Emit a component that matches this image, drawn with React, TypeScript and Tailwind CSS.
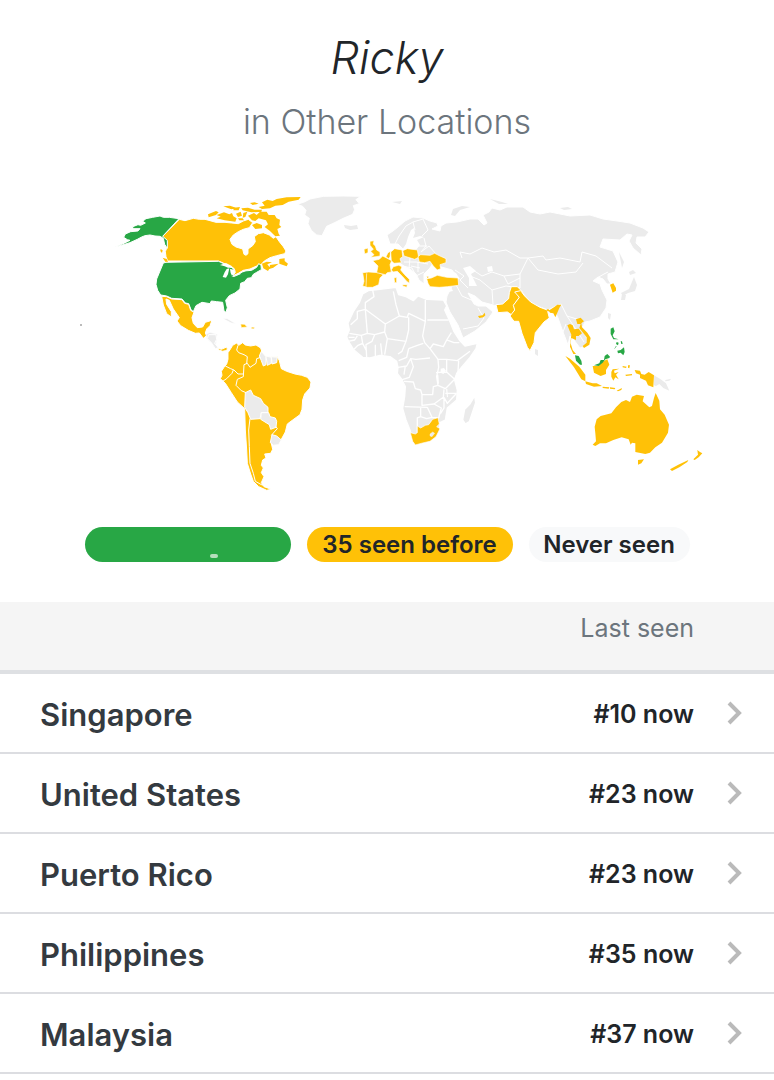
type Location = {
  name: string;
  rank: string;
};

const locations: Location[] = [
  { name: "Singapore", rank: "#10 now" },
  { name: "United States", rank: "#23 now" },
  { name: "Puerto Rico", rank: "#23 now" },
  { name: "Philippines", rank: "#35 now" },
  { name: "Malaysia", rank: "#37 now" },
];

const NOW = "#28a745";
const BEFORE = "#ffc107";
const NEVER = "#ebebeb";

function NorthAmerica() {
  return (
    <g transform="translate(110 185) scale(0.3333)" strokeWidth="3" stroke="#fff">
      {/* Greenland */}
      <path fill={NEVER} d="M562 58 585 50 600 42 640 34 700 33 752 34 738 44 748 56 730 62 734 74 728 88 700 100 672 114 650 124 636 152 620 150 604 136 594 116 598 100 584 90 588 76 578 64z" />
      {/* Canada */}
      <path fill={BEFORE} d="M208 103 225 107 250 100 268 103 285 103 300 107 318 112 345 112 365 114 385 116 400 108 415 103 428 113 418 128 400 133 385 140 370 150 360 163 366 178 378 186 398 192 402 208 408 211 414 206 414 192 428 182 436 170 433 155 445 146 460 143 478 150 490 160 498 155 508 170 520 185 528 198 524 206 500 212 480 218 463 228 452 240 440 243 420 252 400 256 385 265 366 274 376 262 372 250 362 246 352 240 335 232 325 228 173 228 168 215 166 200 170 190 172 170 158 154z" />
      <g fill={BEFORE} stroke="none">
        <path d="M158 218 170 222 177 236 166 230zM152 192l6 4-2 8-5-6zM456 236 470 230 486 232 472 238 480 248 474 258 460 250zM480 240 506 236 490 248 478 252zM508 222 524 220 524 228 534 236 530 244 508 236z" />
        <path d="M294 88 318 78 326 82 318 90 296 97zM320 90 342 82 358 88 366 84 370 94 380 100 376 110 344 106 320 100 332 95zM340 64 360 62 380 69 364 73zM372 68 390 66 386 76 370 76zM378 86 392 80 396 92 384 96zM400 84 412 80 406 96 398 98zM394 70 414 68 434 74 456 74 454 80 424 82 398 76zM420 54 434 52 446 56 428 60zM414 92 432 84 440 90 450 80 470 80 476 90 494 90 500 100 510 104 508 120 514 126 502 132 506 146 510 152 496 154 480 138 464 126 474 118 468 106 446 100 436 108 426 106zM426 120 440 114 456 120 456 130 436 132zM384 100 398 100 402 106 388 106z" />
        <path d="M446 66 464 62 456 52 472 44 488 48 500 42 530 37 572 36 566 44 536 50 518 60 496 62 480 70 456 72z" />
      </g>
      {/* United States */}
      <path fill={NOW} d="M168 232 326 229 345 238 366 248 374 256 370 272 386 268 402 258 425 256 440 247 446 236 453 240 454 254 440 262 430 268 424 278 412 280 404 290 392 295 390 312 375 324 358 332 347 346 352 368 348 382 342 378 338 352 320 350 304 348 300 356 276 352 258 362 250 380 243 374 236 356 226 354 216 342 185 340 170 333 152 330 143 316 138 298 140 282 150 258 160 234z" />
      <path fill={NOW} d="M207 101 178 97 160 97 150 93 128 97 108 101 98 109 106 114 92 121 84 119 66 126 72 131 90 131 84 138 62 140 46 147 41 157 52 164 60 166 44 174 14 187 60 173 82 163 95 156 105 152 120 150 135 153 150 154 160 160 164 178 172 190 172 166 158 154z" />
      {/* Great Lakes */}
      <path fill="#fff" stroke="none" d="M330 240 348 234 364 242 370 248 354 248 344 244zM350 252 358 250 354 268 348 278 338 276 344 262zM360 252 374 254 374 264 366 272 362 264zM364 276 384 268 394 266 372 276zM396 258 412 256 400 262z" />
      {/* Mexico */}
      <path fill={BEFORE} d="M155 334 170 335 185 342 216 344 224 355 236 358 242 376 252 382 246 398 250 415 262 428 278 426 286 412 306 406 300 422 290 432 286 444 290 452 280 460 268 444 256 445 235 436 212 422 201 408 208 398 190 372 178 346 168 342 170 358 184 380 184 396 170 386 160 360z" />
      {/* Central America and the Caribbean */}
      <g fill={NEVER} strokeWidth="2">
        <path d="M288 448 300 442 322 448 320 466 318 478 300 470 290 460z" />
        <path d="M338 400 352 401 378 416 364 414 348 406z" />
        <path fill={BEFORE} d="M392 417 404 418 412 426 394 428z" />
        <path fill={BEFORE} d="M424 426l10 1-2 5-8-1z" />
      </g>
    </g>
  );
}

function SouthAmerica() {
  return (
    <g transform="translate(200 320) scale(0.3333)" strokeWidth="3" stroke="#fff">
      <path fill={NEVER} d="M26 44 48 44 50 58 44 70 56 84 46 86 34 68 22 56z" />
      <path fill={BEFORE} d="M52 84 64 88 78 82 84 88 76 92 68 94 56 90z" />
      <path fill={BEFORE} d="M61 176 66 166 64 154 72 142 80 132 84 118 84 98 92 86 98 76 110 69 116 76 128 68 136 75 152 78 168 75 182 84 186 96 195 108 215 110 232 110 238 122 244 146 260 154 285 162 305 166 322 172 333 186 330 204 314 222 308 240 306 268 300 284 278 300 262 312 256 336 244 358 236 374 220 376 214 370 218 388 212 400 194 402 198 414 188 420 184 436 190 444 184 458 192 470 184 488 192 500 214 508 200 511 176 500 160 484 152 462 142 430 140 390 136 330 134 266 112 246 94 218 76 190z" />
      <g fill={NEVER}>
        <path d="M184 94 198 110 198 134 190 138 184 122 178 108z" />
        <path d="M198 108 214 112 214 130 202 136z" />
        <path d="M214 110 232 112 230 128 216 132z" />
        <path d="M136 218 152 210 160 226 182 236 190 250 204 262 204 278 184 278 180 296 152 298 144 278 134 262z" />
        <path d="M184 278 206 278 210 290 226 294 230 304 228 322 212 328 208 314 182 298z" />
        <path d="M216 344 230 348 244 360 236 374 220 376 211 368z" />
      </g>
      <g fill="none">
        <path d="M182 112 170 116 168 130 150 142 142 130 132 134 130 170 112 178 108 196 124 212 138 218" />
        <path d="M114 76 110 90 116 98 132 104 142 110 140 132" />
        <path d="M76 138 92 146 102 150 114 162 130 162M68 184 80 176 96 160 100 150" />
        <path d="M150 296 146 330 148 380 150 430 160 460 166 484 188 496" />
        <path d="M228 320 232 326 214 346" />
      </g>
    </g>
  );
}

function Africa() {
  return (
    <g transform="translate(330 280) scale(0.3333)" strokeWidth="4" stroke="#fff" strokeLinejoin="round">
      <path fill={NEVER} d="M98 42 115 32 150 28 198 22 206 44 228 50 250 62 264 48 290 58 340 60 350 78 344 90 360 125 372 155 388 180 405 198 442 190 438 206 420 232 396 260 380 280 374 300 382 330 380 360 352 384 346 420 330 428 328 452 310 475 285 490 256 494 244 470 240 450 228 420 218 385 224 350 226 320 214 296 202 280 204 262 200 244 180 230 150 226 120 234 98 232 72 210 56 185 50 170 58 150 54 130 70 95 88 68z" />
      <g fill="none">
        <path d="M128 30 132 50 106 68 106 88 166 132 208 108 198 74 190 34M106 88 82 94 82 116 62 134M106 88 112 160 94 166 58 160M166 132 164 156 134 164 112 160" />
        <path d="M208 108 232 112 236 100 286 124 286 60M292 120 356 120M236 112 236 150 228 184 216 214 204 222M286 124 278 168 284 188 300 206 324 238 350 238 382 242 420 214" />
        <path d="M164 156 172 176 164 224M172 176 228 184M134 164 126 184 108 194 110 232M136 230 136 194M156 226 152 190M94 166 98 190 84 196 72 208M54 184 74 180 82 168M56 172 74 172M98 190 108 210" />
        <path d="M236 206 262 196 280 190M236 206 230 232 206 242M204 262 230 258 242 236 258 238 300 234M242 236 250 260 238 292 214 300M226 258 222 284" />
        <path d="M300 206 310 192 340 200 350 180 364 158M350 180 372 188 388 188M324 238 326 262 320 290 324 316 346 326 374 298 350 276 350 238M374 298 384 276 386 242M318 278 350 276" />
        <path d="M222 304 250 306 256 326 272 330 276 344 308 344 310 320 324 316M224 380 292 382M272 382 272 410 262 414 262 460M276 344 276 376 312 372 340 352 342 328M342 352 352 370 380 340M292 382 306 412 326 414 334 384 312 372M272 410 290 416 306 412M342 352 342 384 332 400M346 340 380 340" />
      </g>
      <path fill="#fff" stroke="none" d="M332 266l10-2 6 8-8 10-8-4zM320 284l3 26 4 2-2-28zM348 328l3 24 3-1-2-24z" />
      {/* South Africa */}
      <path fill={BEFORE} strokeWidth="2" d="M241 458 256 462 262 458 262 438 272 444 286 436 296 434 308 418 324 413 328 432 320 440 330 446 318 470 300 484 278 489 256 495 248 484z" />
      <path fill={NEVER} strokeWidth="1" d="M300 462 308 456 314 460 306 470 300 468z" />
      <path fill={NEVER} d="M434 348 437 368 418 425 406 432 398 420 404 388 420 372z" />
    </g>
  );
}

function Eurasia() {
  return (
    <g stroke="#fff" strokeWidth="1" strokeLinejoin="round">
      <path
        fill={NEVER}
        d="M387 235 393 231 398 227 405 221 413 217 423 218 430 221 437 223 438 226 432 229 440 231 441 226 446 223 457 222 470 219 478 219 484 225 487 223 483 215 489 212 492 208 500 210 507 207 523 207 530 212 540 214 550 212 570 216 590 215 603 219 617 221 630 223 643 228 649 232 645 237 637 237 636 243 642 249 641 255 633 248 629 241 632 235 627 234 620 240 603 239 600 247 613 251 618 262 615 272 608 274 608 279 611 284 607 284 603 279 598 277 593 281 600 284 602 290 607 300 606 308 600 317 590 321 585 322 582 328 586 336 588 345 580 348 574 340 570 336 568 345 563 332 558 318 555 312 545 312 530 314 520 312 500 306 497 306 482 302 475 296 468 293 474 304 478 306 486 306 493 312 486 322 475 331 463 338 458 325 450 312 446 302 447 296 452 286 458 278 452 270 438 266 430 268 424 274 424 284 419 280 416 274 410 269 404 266 398 262 396 254 408 250 414 248 416 240 408 244 404 250 398 244 390 244z"
      />
      {/* inland seas */}
      <g fill="#fff" stroke="none">
        <path d="M396 249 402 250 406 244 408 237 411 230 414 228 415 233 413 238 420 236 424 237 417 240 420 245 416 250 404 253 396 253z" />
        <path d="M428 270 432 264 439 266 446 269 456 273 460 279 450 278 440 276 431 278z" />
        <path d="M463 268 470 266 476 271 471 274 475 282 477 286 469 286 469 278z" />
        <path d="M487 267l5-1 1 5-5 1zM444 293l9-2-2-4-8 2z" />
      </g>
      {/* Arctic islands, Iceland, Japan, Sri Lanka, Taiwan */}
      <g fill={NEVER} stroke="none">
        <path d="M344 225 351 226 357 225 358 229 350 230 345 228zM392 202 402 201 400 204zM451 215 453 209 462 206 470 207 460 210 455 216zM490 199 502 202 508 204 499 204zM560 208l8-1 4 2-8 1z" />
        <path d="M629 272 633 270 636 273 630 275zM634 277 637 285 635 291 628 293 623 296 621 293 629 289zM622 294l4 1-1 5-4 0zM619 252 624 262 622 268zM535 349l3 1 0 6-3-2zM608 313l3 1-1 6-2-2z" />
      </g>
      {/* borders */}
      <g fill="none">
        <path d="M394 246 399 236 406 226 413 222 423 219 428 230 422 236M413 222 415 230M424 238 426 246 421 252 429 246 436 254M418 246 427 246M462 258 460 252 470 254 482 248 494 252 506 250 520 258 528 258 543 256 546 260 560 258 580 262 582 252 596 256 612 268" />
        <path d="M528 258 538 270 558 274 576 272 583 263M470 268 482 276 492 272 504 276 520 274 528 258M470 276 480 280 492 290 506 286 520 288 520 274M492 290 493 304M504 276 508 284 520 278M455 270 464 276 460 280 468 288M455 283 462 296 476 302M447 290 455 283M463 329 478 326 484 318 478 308M520 290 532 304 548 310 556 306 561 304 567 316 580 320M567 316 575 328 584 342M563 332 566 324M597 278 604 274 608 272" />
        <path d="M404 262 416 262 428 264M402 266 412 268 416 276 424 272M410 258 409 268M418 262 418 272M411 266 420 268" />
      </g>

      <g transform="translate(330 190) scale(0.3333)" fill={BEFORE} strokeWidth="2">
        <path d="M120 154 132 152 130 162 136 168 140 180 150 186 150 198 138 200 122 202 132 194 122 184 130 178 120 166z" />
        <path d="M102 178 114 174 114 188 104 192z" />
        <path d="M98 248 116 246 146 248 160 254 150 264 146 284 128 292 112 292 98 288 102 274z" />
        <path d="M128 212 148 208 158 198 170 204 185 212 180 224 184 246 172 248 166 254 140 248 144 228z" />
        <path d="M168 200 174 188 182 184 180 200 176 206zM182 186 194 176 216 180 218 200 210 206 214 218 192 220 184 212z" />
        <path d="M218 182 232 176 262 180 266 202 254 208 222 198z" />
        <path d="M264 200 272 194 300 196 314 190 330 198 348 206 348 218 330 224 332 236 322 240 310 228 300 214 284 218 268 216z" />
        <path d="M184 240 190 230 206 226 216 230 212 240 224 254 238 268 238 280 230 274 218 260 202 244 190 246zM192 264l8-2 0 16-6 0zM218 284l14 0-2 8-12-4z" />
        <path d="M290 266 304 264 322 256 350 262 384 264 386 286 352 290 328 292 300 290 294 280zM290 258l8 2-6 6z" />
        <path fill="none" stroke="#fff" d="M110 250 108 290" />
      </g>

      <g transform="translate(470 190) scale(0.3333)" fill={BEFORE} strokeWidth="3">
        <path d="M124 290 142 290 158 306 148 322 132 344 134 360 130 378 112 366 84 368 78 344 98 342 116 326 118 308z" />
        <path d="M134 306 152 302 164 318 182 336 210 352 232 360 238 384 222 396 196 428 192 458 180 482 172 472 156 430 146 394 132 394 120 378 134 360 130 346 148 322z" />
        <path stroke="none" d="M24 378 38 376 44 368 46 376 40 382 28 384z" />
        <path stroke="none" d="M230 358l6 0 4 6-8 0zM236 362 252 352 262 344 274 344 268 354 262 368 256 382 250 370 240 368z" />
        <path stroke="none" d="M420 284 430 280 438 294 438 302 428 308z" />
      </g>
    </g>
  );
}

function Oceania() {
  return (
    <g transform="translate(550 300) scale(0.3333)" fill={BEFORE}>
      <path d="M52 76 60 72 68 76 72 88 86 86 96 100 86 108 78 108 78 120 64 114 62 130 68 150 78 162 70 162 60 140 64 104z" />
      <path d="M78 58 92 53 102 64 94 70 96 82 112 98 122 114 118 134 102 144 98 138 110 128 110 112 88 84 92 72 82 72z" />
      <path d="M46 168 60 176 88 200 106 224 106 244 94 238 72 202z" />
      <path d="M106 244 128 250 140 250 156 258 132 260 108 252zM158 260l20 2-2 4-18-2zM180 262l16 2-2 4-14-2zM200 272l16-8-2 6-10 4z" />
      <path d="M128 198 145 198 160 184 172 178 178 194 168 210 168 222 152 228 132 218z" />
      <path d="M184 216 188 208 208 206 192 212 194 220 206 216 198 224 206 238 196 232 190 242 184 230zM218 198l12 2-2 4-10-2zM234 196l6 0-2 9-4-2zM226 224l20-2 0 4-18 2z" />
      <path d="M254 210 270 212 274 222 284 224 296 216 312 226 310 262 294 256 288 242 270 234 270 224 258 220z" />
      <path fill={NEVER} d="M312 226 332 238 348 250 358 272 340 264 328 252 318 258 312 256zM346 240l18-4-6 6-12 2z" />
      {/* Malaysia and the Philippines */}
      <g fill={NOW}>
        <path d="M75 166 86 168 94 182 96 194 90 194 78 182z" />
        <path d="M132 196 148 190 152 180 162 180 164 168 172 162 180 170 178 174 166 178 158 188 146 198z" />
        <path d="M182 86 190 82 194 94 188 106 192 114 206 118 190 118 182 102zM200 126l6 2-2 8-6-4zM212 124l4 0 2 8-4 0zM196 144l4-6-2 0-6 10zM202 152 212 150 222 142 224 156 220 166 212 158 204 160z" />
      </g>
      {/* Australia and New Zealand */}
      <path d="M128 434 138 424 136 400 134 380 140 358 152 348 184 340 198 322 214 306 228 300 240 306 246 290 260 284 282 288 278 304 298 322 306 318 312 294 317 279 328 302 330 328 344 344 357 374 354 398 336 428 316 442 300 458 286 462 256 456 256 430 246 428 242 434 236 418 215 412 190 420 168 430 150 430 136 438z" />
      <path d="M264 480 282 478 274 490 264 494zM360 508 385 494 415 480 412 486 388 502 366 513zM430 478 444 464 442 450 450 456 457 460 446 472 434 480z" />
    </g>
  );
}

function WorldMap() {
  return (
    <svg viewBox="0 180 774 320" className="block w-full" role="img" aria-label="World map of locations">
      <NorthAmerica />
      <SouthAmerica />
      <Africa />
      <Eurasia />
      <Oceania />
      <path fill="#bbb" d="M80 324h2v2h-2z" />
    </svg>
  );
}

function Chevron() {
  return (
    <svg viewBox="0 0 16 24" className="h-6 w-4" fill="none" stroke="#bababa" strokeWidth="4" aria-hidden="true">
      <path d="M3 2 13 12 3 22" />
    </svg>
  );
}

export default function App() {
  return (
    <main className="min-h-screen bg-white font-[Inter,'Liberation_Sans',sans-serif] text-[#212529]">
      <header className="flex flex-col items-center pt-7">
        <h1 className="text-[45px] leading-[60px] font-light italic">Ricky</h1>
        <p className="mt-2 text-[34px] leading-[52px] font-light text-[#6c757d]">in Other Locations</p>
      </header>

      <section className="mt-8">
        <WorldMap />
        <div className="mt-[27px] flex justify-center gap-4 text-2xl leading-[35px] font-semibold">
          <span className="flex h-[35px] w-[206px] items-end rounded-full bg-[#28a745] pb-1 pl-[125px]">
            <span className="h-1 w-2 rounded-full bg-[#b5dfbc]" />
          </span>
          <span className="flex h-[35px] w-[206px] items-center justify-center rounded-full bg-[#ffc107]">35 seen before</span>
          <span className="flex h-[35px] w-[161px] items-center justify-center rounded-full bg-[#f8f9fa]">Never seen</span>
        </div>
      </section>

      <table className="mt-10 w-full border-separate border-spacing-0">
        <thead>
          <tr className="bg-[#f5f5f5] align-top">
            <th aria-label="Location" className="h-[72px] border-b-4 border-[#dee0e3]" />
            <th className="border-b-4 border-[#dee0e3] pt-2 text-right text-[25px] leading-9 font-normal text-[#6c757d]">
              Last seen
            </th>
            <th aria-label="Open" className="w-20 border-b-4 border-[#dee0e3]" />
          </tr>
        </thead>
        <tbody>
          {locations.map((location) => (
            <tr key={location.name}>
              <td className="h-20 border-b-2 border-[#dcdde1] pt-1 pl-10 text-[31px] font-semibold text-[#343a40]">
                {location.name}
              </td>
              <td className="border-b-2 border-[#dcdde1] pt-1 text-right text-[25px] font-semibold">{location.rank}</td>
              <td className="w-20 border-b-2 border-[#dcdde1]">
                <a href="#" aria-label={location.name} className="flex justify-center">
                  <Chevron />
                </a>
              </td>
            </tr>
          ))}
        </tbody>
      </table>
    </main>
  );
}
